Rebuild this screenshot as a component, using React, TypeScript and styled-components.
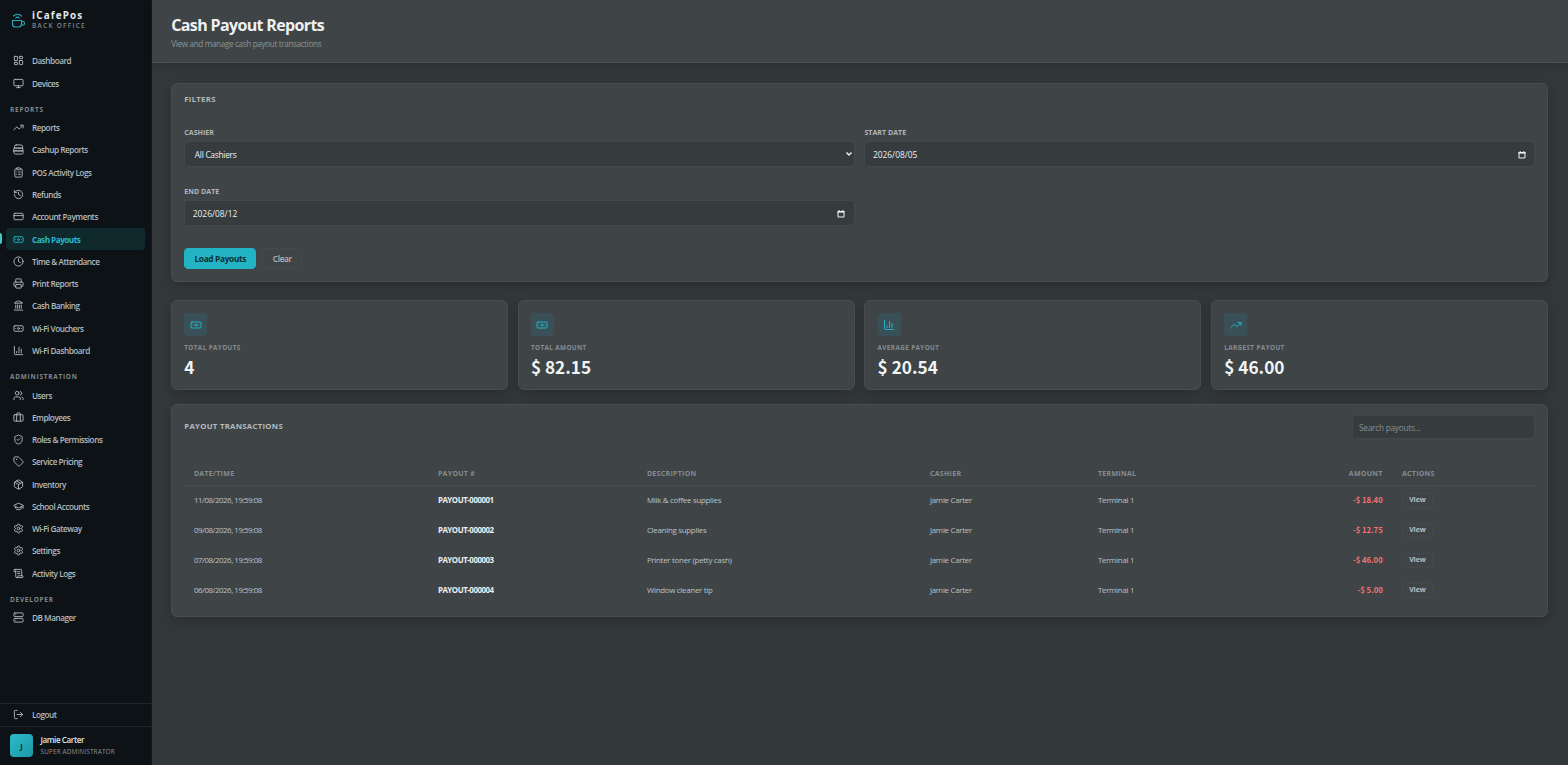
import React, { useState } from 'react';
import styled, { createGlobalStyle } from 'styled-components';
import {
  Banknote,
  Briefcase,
  ChartColumn,
  ClipboardList,
  Clock,
  CreditCard,
  GraduationCap,
  History,
  Landmark,
  LayoutDashboard,
  LogOut,
  Monitor,
  Package,
  Printer,
  ScrollText,
  Server,
  Settings,
  ShieldCheck,
  Tag,
  TrendingUp,
  Users,
} from 'lucide-react';

const GlobalStyle = createGlobalStyle`
  * {
    box-sizing: border-box;
  }

  body {
    margin: 0;
    background: #33383b;
    color: #eceff1;
    font-family: 'Open Sans', 'Noto Sans', sans-serif;
    overflow: hidden;
  }

  button, input {
    font-family: inherit;
  }
`;

const Layout = styled.div`
  display: flex;
  height: 100vh;
`;

// ---------- sidebar ----------

const Sidebar = styled.aside`
  display: flex;
  flex-direction: column;
  flex: none;
  width: 152px;
  background: #0d1216;
  border-right: 1px solid #15191c;
`;

const Brand = styled.div`
  display: flex;
  align-items: center;
  gap: 7px;
  height: 42px;
  padding: 0 0 1px 11px;
  margin-bottom: 8px;
`;

const BrandName = styled.div`
  font-size: 9.8px;
  font-weight: 700;
  line-height: 11px;
  letter-spacing: 1.2px;
  color: #e4e8ea;
`;

const BrandSub = styled.div`
  font-size: 6.4px;
  font-weight: 600;
  line-height: 10px;
  letter-spacing: 1.3px;
  color: #7f888b;
`;

const Nav = styled.nav`
  flex: 1;
  padding: 0 6px;
`;

const NavItem = styled.a<{ $active?: boolean }>`
  position: relative;
  display: flex;
  align-items: center;
  gap: 7.7px;
  height: 21.6px;
  margin-bottom: 0.68px;
  padding-left: 7.3px;
  border-radius: 4px;
  font-size: 8.2px;
  font-weight: ${(props) => (props.$active ? 700 : 600)};
  letter-spacing: ${(props) => (props.$active ? '-0.52px' : '-0.47px')};
  white-space: nowrap;
  color: ${(props) => (props.$active ? '#26b9ca' : '#b4babd')};
  background: ${(props) => (props.$active ? '#0f292d' : 'transparent')};

  &::before {
    content: '';
    display: ${(props) => (props.$active ? 'block' : 'none')};
    position: absolute;
    left: -6px;
    top: 5px;
    width: 2px;
    height: 11px;
    border-radius: 0 2px 2px 0;
    background: #3fc9c4;
  }
`;

const NavLabel = styled.div`
  height: 22.4px;
  padding: 10.4px 0 0 4px;
  font-size: 6.4px;
  font-weight: 700;
  line-height: 9px;
  letter-spacing: 0.8px;
  color: #7f888b;
`;

const LogoutRow = styled.div`
  padding: 0 6px;
  border-top: 1px solid #20272a;
`;

const UserRow = styled.div`
  display: flex;
  align-items: center;
  gap: 7.5px;
  height: 39px;
  padding: 0 0 1px 10px;
  border-top: 1px solid #20272a;
`;

const Avatar = styled.div`
  display: flex;
  align-items: center;
  justify-content: center;
  width: 23px;
  height: 23px;
  border-radius: 4px;
  background: linear-gradient(135deg, #2bbccb, #1e97a4);
  color: #0d2b30;
  font-size: 7.5px;
  font-weight: 700;
`;

const UserName = styled.div`
  font-size: 8.1px;
  font-weight: 600;
  line-height: 12px;
  letter-spacing: -0.42px;
  color: #dfe3e5;
`;

const UserRole = styled.div`
  font-size: 6.4px;
  line-height: 11px;
  letter-spacing: 0.15px;
  color: #8a9396;
`;

// ---------- main ----------

const Main = styled.main`
  flex: 1;
  min-width: 0;
`;

const Header = styled.header`
  height: 63px;
  padding: 15px 0 0 19.3px;
  background: #3f4447;
  border-bottom: 1px solid #4b5053;
  box-shadow: 0 3px 10px rgba(0, 0, 0, 0.16);
`;

const Title = styled.h1`
  margin: 0;
  font-size: 16px;
  font-weight: 700;
  line-height: 21px;
  letter-spacing: -0.65px;
  color: #eef1f2;
`;

const Subtitle = styled.p`
  margin: 0;
  font-size: 8.2px;
  line-height: 16px;
  letter-spacing: -0.37px;
  color: #87949a;
`;

const Content = styled.div`
  display: flex;
  flex-direction: column;
  padding: 20px 20px 20px 19px;
`;

const Card = styled.section`
  background: #3f4447;
  border: 1px solid #484d50;
  border-radius: 6px;
  box-shadow: 0 4px 12px rgba(0, 0, 0, 0.2);
`;

const CardTitle = styled.h2`
  margin: 0;
  font-size: 7.8px;
  font-weight: 700;
  line-height: 12px;
  letter-spacing: 0.26px;
  color: #b4babd;
`;

const FilterCard = styled(Card)`
  height: 199px;
  padding: 9px 12px 0 12.3px;
`;

const FilterGrid = styled.div`
  display: grid;
  grid-template-columns: 1fr 1fr;
  gap: 19px 9.6px;
  margin-top: 22px;
`;

const FieldLabel = styled.label`
  display: block;
  font-size: 7px;
  font-weight: 700;
  line-height: 12px;
  letter-spacing: 0.05px;
  color: #b0b6b9;
`;

const Control = styled.div<{ $select?: boolean }>`
  display: flex;
  align-items: center;
  justify-content: space-between;
  height: 26px;
  margin-top: 2px;
  padding: ${(props) => (props.$select ? '0 1px 0 9.5px' : '1px 8.5px 0 7.5px')};
  background: #363b3e;
  border: 1px solid #43484b;
  border-radius: 4px;
  font-size: 8.4px;
  letter-spacing: ${(props) => (props.$select ? '-0.28px' : '0')};
  color: #eceff1;
`;

const Actions = styled.div`
  display: flex;
  gap: 6px;
  margin-top: 22px;
`;

const Button = styled.button<{ $primary?: boolean }>`
  height: 21px;
  width: ${(props) => (props.$primary ? '72px' : '40px')};
  padding: 0;
  border: 1px solid ${(props) => (props.$primary ? '#22b4c4' : '#44494c')};
  border-radius: 4px;
  background: ${(props) => (props.$primary ? '#22b4c4' : 'transparent')};
  color: ${(props) => (props.$primary ? '#0b2e33' : '#b4babd')};
  font-size: 8.3px;
  font-weight: ${(props) => (props.$primary ? 700 : 600)};
  letter-spacing: -0.32px;
`;

const Stats = styled.div`
  display: grid;
  grid-template-columns: repeat(4, 1fr);
  gap: 9.6px;
  margin: 18px 0 14px;
`;

const StatCard = styled(Card)`
  height: 90px;
  padding: 12px 12.3px;
`;

const StatIcon = styled.div`
  display: flex;
  align-items: center;
  justify-content: center;
  width: 23px;
  height: 23px;
  border-radius: 4px;
  background: #3a5058;
  color: #22b4c4;
`;

const StatLabel = styled.div`
  margin-top: 7px;
  font-size: 6.3px;
  font-weight: 700;
  line-height: 10px;
  letter-spacing: 0.42px;
  color: #858d90;
`;

const StatValue = styled.div`
  margin-top: 3px;
  font-family: 'Noto Sans CJK JP', 'Noto Sans', sans-serif;
  font-size: 17.2px;
  font-weight: 700;
  line-height: 22px;
  color: #f1f4f5;
`;

const TableCard = styled(Card)`
  height: 213px;
  padding: 10px 12px 0 12.3px;
`;

const TableHead = styled.div`
  display: flex;
  align-items: center;
  justify-content: space-between;
  height: 24px;
  margin-bottom: 23px;
  padding-top: 0;

  h2 {
    padding-bottom: 2px;
  }
`;

const Search = styled.input`
  width: 183px;
  height: 24px;
  padding: 1px 6px 0;
  border: 1px solid #42474a;
  border-radius: 4px;
  background: #363b3e;
  color: #eceff1;
  font-size: 8.3px;
  letter-spacing: -0.25px;
  outline: none;

  &::placeholder {
    color: #878f93;
  }
`;

const Table = styled.table`
  width: 100%;
  table-layout: fixed;
  border-collapse: collapse;
`;

const Th = styled.th<{ $w?: number; $right?: boolean }>`
  width: ${(props) => (props.$w ? `${props.$w}px` : 'auto')};
  height: 23px;
  padding: 0 9.6px;
  border-bottom: 1px solid #484d50;
  text-align: ${(props) => (props.$right ? 'right' : 'left')};
  font-size: 7px;
  font-weight: 700;
  letter-spacing: 0.3px;
  color: #858d90;
`;

const Td = styled.td<{ $tight?: boolean; $strong?: boolean }>`
  height: 30px;
  padding: 0 9.6px;
  font-size: 7.9px;
  font-weight: ${(props) => (props.$strong ? 700 : 400)};
  letter-spacing: ${(props) => (props.$tight || props.$strong ? '-0.46px' : '-0.27px')};
  white-space: nowrap;
  color: ${(props) => (props.$strong ? '#eceff1' : '#bcc2c5')};
`;

const AmountTd = styled(Td)`
  padding-bottom: 2px;
  text-align: right;
  font-family: 'Noto Sans CJK JP', 'Noto Sans', sans-serif;
  font-size: 7.7px;
  font-weight: 700;
  letter-spacing: 0;
  color: #f87171;
`;

const ViewButton = styled.button`
  display: block;
  width: 31px;
  height: 15px;
  padding: 0;
  border: 1px solid #44494c;
  border-radius: 3px;
  background: transparent;
  color: #b9bfc2;
  font-size: 7px;
  font-weight: 700;
  line-height: 12px;
  letter-spacing: -0.1px;
`;

const Logo = () => (
  <svg width="14" height="16" viewBox="0 0 28 32" fill="none" stroke="#25aebd" strokeWidth="2.2" strokeLinecap="round">
    <path d="M5 6c4.500-4.500 11.500-4.500 16 0" />
    <path d="M9.500 10c2-2.300 5-2.300 7 0" />
    <path d="M3 15h18v7c0 4-2.500 6-6 6H9c-3.500 0-6-2-6-6z" />
    <path d="M21 17h2.500a3 3 0 0 1 0 7H21" />
  </svg>
);

const CashRegister = ({ size = 11 }: { size?: number }) => (
  <svg width={size} height={size} viewBox="0 0 24 24" fill="none" stroke="currentColor" strokeWidth="2" strokeLinecap="round" strokeLinejoin="round">
    <path d="M7 2h10a4 4 0 0 1 4 4v3H3V6a4 4 0 0 1 4-4z" />
    <path d="M3 9h18l1 6H2z" />
    <path d="M2 15h20v4a3 3 0 0 1-3 3H5a3 3 0 0 1-3-3z" />
  </svg>
);

const Chevron = () => (
  <svg width="8" height="6" viewBox="0 0 8 6" fill="none" stroke="#f1f4f5" strokeWidth="1.4">
    <path d="M1.500 1.500 4 4l2.500-2.500" />
  </svg>
);

const Calendar = () => (
  <svg width="8" height="8" viewBox="0 0 8 8" fill="none" stroke="#f1f4f5">
    <path d="M1 1.500h6v5.500H1z" />
    <path d="M.5 1.800h7" strokeWidth="1.600" />
    <path d="M2.200 0v1M5.800 0v1" />
  </svg>
);

const navGroups = [
  {
    label: '',
    items: [
      { name: 'Dashboard', icon: LayoutDashboard },
      { name: 'Devices', icon: Monitor },
    ],
  },
  {
    label: 'REPORTS',
    items: [
      { name: 'Reports', icon: TrendingUp },
      { name: 'Cashup Reports', icon: CashRegister },
      { name: 'POS Activity Logs', icon: ClipboardList },
      { name: 'Refunds', icon: History },
      { name: 'Account Payments', icon: CreditCard },
      { name: 'Cash Payouts', icon: Banknote },
      { name: 'Time & Attendance', icon: Clock },
      { name: 'Print Reports', icon: Printer },
      { name: 'Cash Banking', icon: Landmark },
      { name: 'Wi-Fi Vouchers', icon: Banknote },
      { name: 'Wi-Fi Dashboard', icon: ChartColumn },
    ],
  },
  {
    label: 'ADMINISTRATION',
    items: [
      { name: 'Users', icon: Users },
      { name: 'Employees', icon: Briefcase },
      { name: 'Roles & Permissions', icon: ShieldCheck },
      { name: 'Service Pricing', icon: Tag },
      { name: 'Inventory', icon: Package },
      { name: 'School Accounts', icon: GraduationCap },
      { name: 'Wi-Fi Gateway', icon: Settings },
      { name: 'Settings', icon: Settings },
      { name: 'Activity Logs', icon: ScrollText },
    ],
  },
  {
    label: 'DEVELOPER',
    items: [{ name: 'DB Manager', icon: Server }],
  },
];

const stats = [
  { label: 'TOTAL PAYOUTS', value: '4', icon: Banknote },
  { label: 'TOTAL AMOUNT', value: '$ 82.15', icon: Banknote },
  { label: 'AVERAGE PAYOUT', value: '$ 20.54', icon: ChartColumn },
  { label: 'LARGEST PAYOUT', value: '$ 46.00', icon: TrendingUp },
];

const payouts = [
  { date: '11/08/2026, 19:59:08', no: 'PAYOUT-000001', description: 'Milk & coffee supplies', amount: '-$ 18.40' },
  { date: '09/08/2026, 19:59:08', no: 'PAYOUT-000002', description: 'Cleaning supplies', amount: '-$ 12.75' },
  { date: '07/08/2026, 19:59:08', no: 'PAYOUT-000003', description: 'Printer toner (petty cash)', amount: '-$ 46.00' },
  { date: '06/08/2026, 19:59:08', no: 'PAYOUT-000004', description: 'Window cleaner tip', amount: '-$ 5.00' },
];

function App() {
  const [search, setSearch] = useState('');
  const visible = payouts.filter((p) =>
    `${p.no} ${p.description}`.toLowerCase().includes(search.toLowerCase())
  );

  return (
    <Layout>
      <GlobalStyle />
      <Sidebar>
        <Brand>
          <Logo />
          <div>
            <BrandName>iCafePos</BrandName>
            <BrandSub>BACK OFFICE</BrandSub>
          </div>
        </Brand>
        <Nav>
          {navGroups.map((group) => (
            <div key={group.label}>
              {group.label && <NavLabel>{group.label}</NavLabel>}
              {group.items.map(({ name, icon: Icon }) => (
                <NavItem key={name} $active={name === 'Cash Payouts'}>
                  <Icon size={11} />
                  {name}
                </NavItem>
              ))}
            </div>
          ))}
        </Nav>
        <LogoutRow>
          <NavItem>
            <LogOut size={11} />
            Logout
          </NavItem>
        </LogoutRow>
        <UserRow>
          <Avatar>J</Avatar>
          <div>
            <UserName>Jamie Carter</UserName>
            <UserRole>SUPER ADMINISTRATOR</UserRole>
          </div>
        </UserRow>
      </Sidebar>

      <Main>
        <Header>
          <Title>Cash Payout Reports</Title>
          <Subtitle>View and manage cash payout transactions</Subtitle>
        </Header>
        <Content>
          <FilterCard>
            <CardTitle>FILTERS</CardTitle>
            <FilterGrid>
              <div>
                <FieldLabel>CASHIER</FieldLabel>
                <Control $select>
                  All Cashiers
                  <Chevron />
                </Control>
              </div>
              <div>
                <FieldLabel>START DATE</FieldLabel>
                <Control>
                  2026/08/05
                  <Calendar />
                </Control>
              </div>
              <div>
                <FieldLabel>END DATE</FieldLabel>
                <Control>
                  2026/08/12
                  <Calendar />
                </Control>
              </div>
            </FilterGrid>
            <Actions>
              <Button $primary>Load Payouts</Button>
              <Button>Clear</Button>
            </Actions>
          </FilterCard>

          <Stats>
            {stats.map(({ label, value, icon: Icon }) => (
              <StatCard key={label}>
                <StatIcon>
                  <Icon size={12} />
                </StatIcon>
                <StatLabel>{label}</StatLabel>
                <StatValue>{value}</StatValue>
              </StatCard>
            ))}
          </Stats>

          <TableCard>
            <TableHead>
              <CardTitle>PAYOUT TRANSACTIONS</CardTitle>
              <Search
                placeholder="Search payouts..."
                value={search}
                onChange={(e) => setSearch(e.target.value)}
              />
            </TableHead>
            <Table>
              <thead>
                <tr>
                  <Th $w={244}>DATE/TIME</Th>
                  <Th $w={209}>PAYOUT #</Th>
                  <Th $w={283}>DESCRIPTION</Th>
                  <Th $w={168}>CASHIER</Th>
                  <Th $w={200}>TERMINAL</Th>
                  <Th $w={104} $right>AMOUNT</Th>
                  <Th>ACTIONS</Th>
                </tr>
              </thead>
              <tbody>
                {visible.map((p) => (
                  <tr key={p.no}>
                    <Td $tight>{p.date}</Td>
                    <Td $strong>{p.no}</Td>
                    <Td>{p.description}</Td>
                    <Td>Jamie Carter</Td>
                    <Td>Terminal 1</Td>
                    <AmountTd>{p.amount}</AmountTd>
                    <Td>
                      <ViewButton>View</ViewButton>
                    </Td>
                  </tr>
                ))}
              </tbody>
            </Table>
          </TableCard>
        </Content>
      </Main>
    </Layout>
  );
}

export default App;
